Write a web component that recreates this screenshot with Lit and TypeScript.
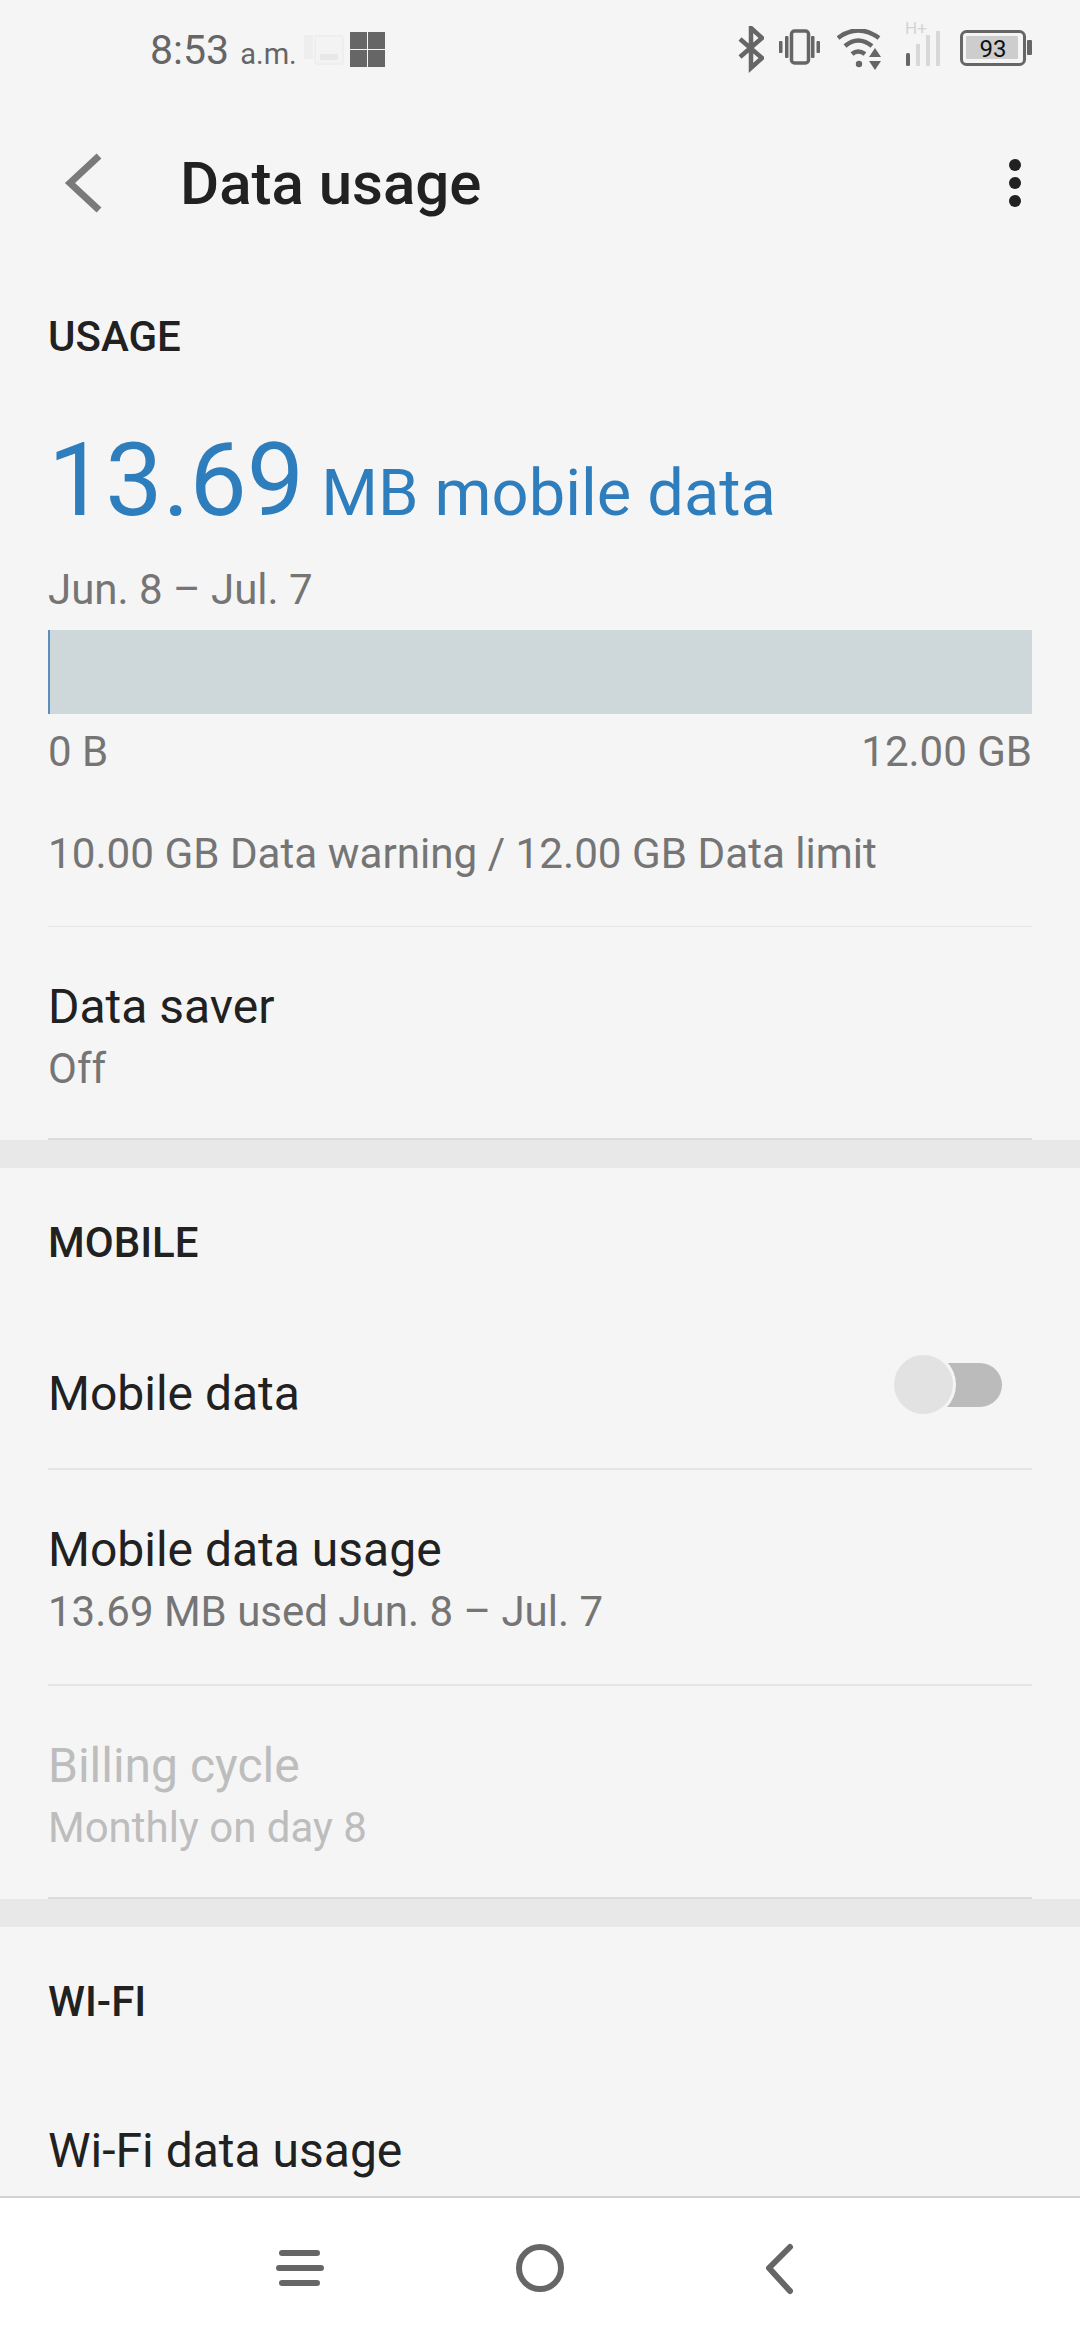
import { LitElement, html, css, svg } from 'lit'
import { customElement } from 'lit/decorators.js'

const statusIcons = [
  {
    w: 26,
    body: svg`<path d="M2 13 L24 32 L13 42 L13 2 L24 12 L2 31" fill="none" stroke="#666" stroke-width="4.5" stroke-linejoin="miter"/>`,
  },
  {
    w: 41,
    body: svg`<rect x="12.5" y="3" width="17" height="32" rx="3" fill="none" stroke="#666" stroke-width="3.5"/>
      <rect x="0" y="13" width="3.5" height="12" rx="1" fill="#666"/>
      <rect x="6" y="8" width="3.5" height="22" rx="1" fill="#666"/>
      <rect x="32" y="8" width="3.5" height="22" rx="1" fill="#666"/>
      <rect x="37.5" y="13" width="3.5" height="12" rx="1" fill="#666"/>`,
  },
  {
    w: 44,
    body: svg`<path d="M1 9 Q21 -6 42 9 M8 17 Q21 6 35 17 M15 25 Q21 20 28 25" fill="none" stroke="#666" stroke-width="4.5"/>
      <circle cx="22" cy="35" r="3.2" fill="#666"/>
      <path d="M32 28 L38 19 L44 28 Z M32 32 L44 32 L38 41 Z" fill="#666"/>`,
  },
  {
    w: 37,
    body: svg`<text x="0" y="18" font-family="Roboto, sans-serif" font-size="17" fill="#d4d4d4">H+</text>
      <rect x="1" y="37" width="4" height="13" rx="1.5" fill="#666"/>
      <rect x="11" y="28" width="4" height="22" fill="#d8d8d8"/>
      <rect x="21" y="19" width="4" height="31" fill="#d8d8d8"/>
      <rect x="31" y="15" width="4" height="35" fill="#d8d8d8"/>`,
  },
  {
    w: 72,
    body: svg`<rect x="1.5" y="2.5" width="63" height="33" rx="5" fill="none" stroke="#666" stroke-width="3"/>
      <rect x="6" y="7" width="52" height="23" rx="1" fill="#cdcdcd"/>
      <rect x="67" y="11" width="5" height="15" rx="1" fill="#666"/>
      <text x="33" y="28" text-anchor="middle" font-family="Roboto, sans-serif" font-size="24" fill="#111">93</text>`,
  },
]

@customElement('app-root')
export class AppRoot extends LitElement {
  static styles = css`
    :host {
      display: flex;
      flex-direction: column;
      width: 1080px;
      height: 2340px;
      background: #f5f5f5;
      font-family: Roboto, 'Liberation Sans', sans-serif;
      color: #212121;
      overflow: hidden;
    }

    .screen {
      flex: 1;
      min-height: 0;
      overflow: hidden;
    }

    .status {
      height: 100px;
      display: flex;
      align-items: flex-start;
      padding: 0 48px 0 150px;
      box-sizing: border-box;
    }

    .time {
      margin-top: 26px;
      font-size: 41px;
      line-height: 48px;
      color: #666;
      white-space: nowrap;
    }

    .time small {
      font-size: 29px;
      margin-left: 1px;
    }

    .notif {
      display: flex;
      align-items: center;
      margin: 32px 0 0 6px;
      gap: 6px;
    }

    .grid {
      display: grid;
      grid-template-columns: 17px 17px;
      grid-template-rows: 17px 17px;
      gap: 1px;
    }

    .grid i {
      background: #666;
    }

    .status-icons {
      margin-left: auto;
      display: flex;
      gap: 0;
    }

    .status-icons svg {
      display: block;
    }

    .toolbar {
      height: 166px;
      display: flex;
      align-items: center;
      position: relative;
      padding-left: 64px;
    }

    .toolbar h1 {
      margin: 2px 0 0 78px;
      font-size: 60px;
      line-height: 70px;
      font-weight: 500;
    }

    .more {
      margin-left: auto;
      margin-right: 59px;
      display: flex;
      flex-direction: column;
      gap: 6px;
    }

    .more i {
      width: 12px;
      height: 12px;
      border-radius: 50%;
      background: #212121;
    }

    .section {
      padding: 0 48px;
    }

    .section-title {
      height: 142px;
      display: flex;
      align-items: center;
      font-size: 42px;
      font-weight: 500;
    }

    .hero {
      display: flex;
      align-items: baseline;
      gap: 17px;
      margin-top: 14px;
      color: #2e7dbd;
      line-height: 120px;
    }

    .hero b {
      font-size: 102px;
      font-weight: 400;
    }

    .hero span {
      font-size: 65px;
    }

    .muted {
      font-size: 42px;
      line-height: 50px;
      color: #757575;
    }

    .range {
      margin-top: 12px;
    }

    .bar {
      margin-top: 15px;
      height: 84px;
      background: #ced8db;
    }

    .bar div {
      height: 100%;
      background: #5b8fb9;
    }

    .scale {
      margin-top: 13px;
      display: flex;
      justify-content: space-between;
    }

    .limits {
      margin-top: 52px;
      padding-bottom: 47px;
      border-bottom: 1px solid #e6e6e6;
      font-size: 42.2px;
    }

    .row {
      padding: 52px 0 47px;
      border-bottom: 2px solid #e4e4e4;
      box-sizing: border-box;
    }

    .row .name {
      font-size: 48px;
      line-height: 56px;
    }

    .row .sub {
      margin-top: 9px;
    }

    .row.last {
      padding-bottom: 44px;
      border-bottom-color: #dcdcdc;
    }

    .row.off .name,
    .row.off .sub {
      color: #bdbdbd;
    }

    .row.switch {
      display: flex;
      justify-content: space-between;
      padding-top: 53px;
      padding-bottom: 46px;
    }

    .toggle {
      position: relative;
      width: 108px;
      height: 44px;
      margin: -3px 30px 0 0;
      border-radius: 22px;
      background: #bbb;
    }

    .toggle::before {
      content: '';
      position: absolute;
      left: 0;
      top: -8px;
      width: 59px;
      height: 59px;
      border-radius: 50%;
      background: #e2e2e2;
      box-shadow: 0 0 0 3px #f5f5f5;
    }

    .band {
      height: 28px;
      margin-bottom: 3px;
      background: #e8e8e8;
    }

    .nav {
      flex: none;
      height: 144px;
      background: #fff;
      border-top: 2px solid #d2d2d2;
      box-sizing: border-box;
    }

    .nav svg {
      display: block;
    }
  `

  private _row(name: string, sub: string, cls = '') {
    return html`<div class="row ${cls}">
      <div class="name">${name}</div>
      <div class="muted sub">${sub}</div>
    </div>`
  }

  render() {
    return html`
      <div class="screen">
        <div class="status">
          <div class="time">8:53 <small>a.m.</small></div>
          <div class="notif">
            <svg width="41" height="30" viewBox="0 0 41 30">
              <rect x="1" y="0" width="9" height="24" fill="#eeeeee"/>
              <rect x="12" y="1" width="28" height="28" rx="2" fill="#f3f3f3" stroke="#eeeeee" stroke-width="2"/>
              <rect x="17" y="19" width="18" height="6" fill="#e8e8e8"/>
            </svg>
            <div class="grid"><i></i><i></i><i></i><i></i></div>
          </div>
          <div class="status-icons">
            ${statusIcons.map(
              (icon, i) => html`<svg
                width="${icon.w}"
                height="72"
                viewBox="0 0 ${icon.w} 72"
                style="margin-left:${[0, 15, 17, 24, 18][i]}px;margin-top:${[26, 28, 29, 16, 29][i]}px"
              >${icon.body}</svg>`
            )}
          </div>
        </div>

        <div class="toolbar">
          <svg width="38" height="60" viewBox="0 0 38 60">
            <path d="M35 3 L6 30 L35 57" fill="none" stroke="#7a7a7a" stroke-width="7"/>
          </svg>
          <h1>Data usage</h1>
          <div class="more"><i></i><i></i><i></i></div>
        </div>

        <div class="section">
          <div class="section-title" style="height:140px">USAGE</div>
          <div class="hero"><b>13.69</b><span>MB mobile data</span></div>
          <div class="muted range">Jun. 8 – Jul. 7</div>
          <div class="bar"><div style="width:${(13.69 / 12000) * 100}%;min-width:2px"></div></div>
          <div class="muted scale"><span>0 B</span><span>12.00 GB</span></div>
          <div class="muted limits">10.00 GB Data warning / 12.00 GB Data limit</div>
          ${this._row('Data saver', 'Off', 'last')}
        </div>
        <div class="band"></div>

        <div class="section">
          <div class="section-title">MOBILE</div>
          <div class="row switch">
            <div class="name">Mobile data</div>
            <div class="toggle"></div>
          </div>
          ${this._row('Mobile data usage', '13.69 MB used Jun. 8 – Jul. 7')}
          ${this._row('Billing cycle', 'Monthly on day 8', 'off last')}
        </div>
        <div class="band"></div>

        <div class="section">
          <div class="section-title">WI-FI</div>
          <div class="row" style="padding-top:51px">
            <div class="name">Wi-Fi data usage</div>
          </div>
        </div>
      </div>

      <div class="nav">
        <svg width="1080" height="142" viewBox="0 0 1080 142">
          <g fill="none" stroke="#666" stroke-width="6" stroke-linecap="round">
            <path d="M282 55 H317 M279 70 H321 M282 85 H317"/>
            <circle cx="540" cy="70" r="21"/>
            <path d="M790 49 L769 70 L790 93" stroke-linejoin="round"/>
          </g>
        </svg>
      </div>
    `
  }
}

declare global {
  interface HTMLElementTagNameMap {
    'app-root': AppRoot
  }
}
